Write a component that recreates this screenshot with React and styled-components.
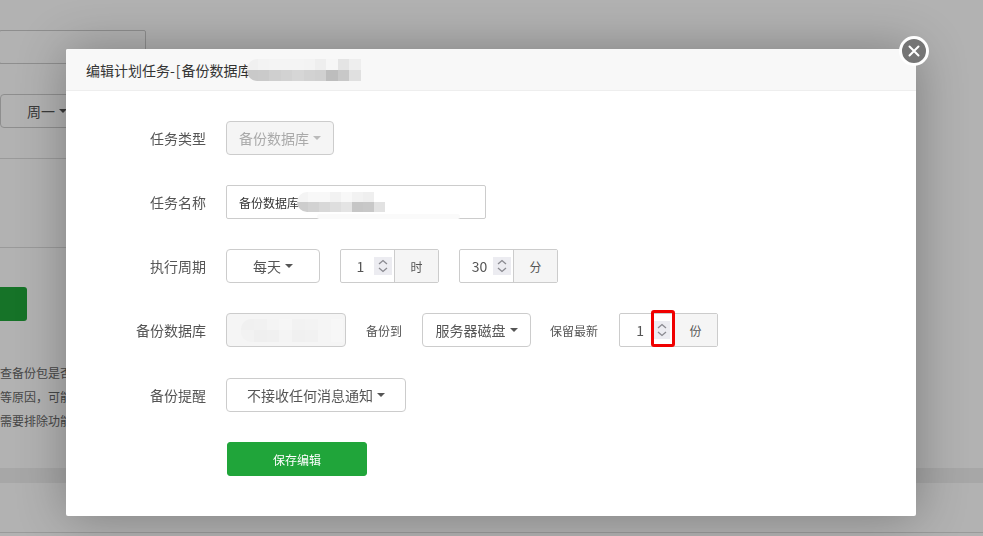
import React from "react";
import styled, { createGlobalStyle } from "styled-components";

const GlobalStyle = createGlobalStyle`
  html, body {
    margin: 0;
    height: 100%;
    overflow: hidden;
    background: #fff;
    font-family: "Noto Sans CJK SC", "Noto Sans", sans-serif;
    color: #555;
  }
`;

// page behind the layer, only its left edge is visible
const Page = styled.div`
  display: flex;
  flex-direction: column;
  height: 536px;
  width: 983px;
  overflow: hidden;
  background: #fff;
`;

const PageSection = styled.div`
  width: 400px;
  height: ${(p) => p.$height}px;
  padding-top: ${(p) => p.$top || 0}px;
  box-sizing: border-box;
  border-bottom: ${(p) => (p.$line ? "1px solid #ddd" : "none")};
`;

const PageInput = styled.div`
  width: 147px;
  height: 34px;
  margin-left: -1px;
  box-sizing: border-box;
  border: 1px solid #ccc;
  border-radius: 2px;
`;

const PageSelect = styled.div`
  display: flex;
  align-items: center;
  gap: 4px;
  width: 90px;
  height: 34px;
  padding-left: 26px;
  box-sizing: border-box;
  border: 1px solid #ccc;
  border-radius: 4px;
  font-size: 14px;
`;

const PageButton = styled.div`
  width: 27px;
  height: 34px;
  background: #20a53a;
  border-radius: 0 3px 3px 0;
`;

const Notes = styled.div`
  display: flex;
  flex-direction: column;
  gap: 6px;
  height: 147px;
  padding-top: 43px;
  box-sizing: border-box;
  font-size: 12px;
  line-height: 18px;
  white-space: nowrap;
  color: #666;
`;

const Band = styled.div`
  height: 15px;
  background: #f0f0f0;
`;

const PageFooter = styled.div`
  height: 49px;
  border-bottom: 1px solid #ddd;
`;

const Shade = styled.div`
  position: fixed;
  inset: 0;
  background: rgba(0, 0, 0, 0.3);
`;

const Modal = styled.div`
  position: absolute;
  left: 66px;
  top: 49px;
  width: 850px;
  height: 467px;
  display: flex;
  flex-direction: column;
  background: #fff;
  border-radius: 2px;
  box-shadow: 1px 1px 50px rgba(0, 0, 0, 0.3);
`;

const Header = styled.div`
  display: flex;
  align-items: center;
  height: 41px;
  padding-left: 20px;
  background: #f8f8f8;
  border-bottom: 1px solid #eee;
  border-radius: 2px 2px 0 0;
  font-size: 14px;
  color: #333;
`;

const Dash = styled.span`
  letter-spacing: 1px;
`;

const CloseButton = styled.button`
  position: absolute;
  top: -13px;
  right: -13px;
  display: flex;
  align-items: center;
  justify-content: center;
  width: 30px;
  height: 30px;
  padding: 0;
  box-sizing: border-box;
  background: #757575;
  border: 3px solid #fff;
  border-radius: 50%;
`;

const Form = styled.div`
  display: flex;
  flex-direction: column;
  gap: 30px;
  padding-top: 30px;
`;

const Row = styled.div`
  display: flex;
  align-items: center;
  height: 34px;
  margin-top: ${(p) => p.$shift || 0}px;
`;

const Label = styled.label`
  width: 140px;
  margin-right: 20px;
  text-align: right;
  font-size: 14px;
  color: #555;
`;

const Select = styled.div`
  display: flex;
  align-items: center;
  justify-content: center;
  gap: 4px;
  width: ${(p) => p.$width}px;
  height: 34px;
  box-sizing: border-box;
  background: ${(p) => (p.$disabled ? "#f5f5f5" : "#fff")};
  border: 1px solid #ccc;
  border-radius: 4px;
  font-size: 14px;
  white-space: nowrap;
  color: ${(p) => (p.$disabled ? "#aaa" : "#555")};
`;

const Caret = styled.span`
  width: 0;
  height: 0;
  border-top: 4px solid ${(p) => p.$color || "#555"};
  border-left: 4px solid transparent;
  border-right: 4px solid transparent;
`;

const NameInput = styled.div`
  position: relative;
  display: flex;
  align-items: center;
  width: 260px;
  height: 34px;
  padding-left: 12px;
  box-sizing: border-box;
  border: 1px solid #ccc;
  border-radius: 2px;
  font-size: 12px;
  color: #333;
`;

// faint tail of the mosaic running over the input's lower edge
const SmudgeTail = styled.span`
  position: absolute;
  left: 90px;
  top: 28px;
  width: 143px;
  height: 5px;
  background: #fafafa;
  border-radius: 3px;
`;

const ReadonlyField = styled.div`
  display: flex;
  align-items: center;
  width: 120px;
  height: 34px;
  padding-left: 14px;
  box-sizing: border-box;
  background: #f5f5f5;
  border: 1px solid #ccc;
  border-radius: 4px;
`;

const Stepper = styled.div`
  position: relative;
  display: flex;
  width: 99px;
  height: 34px;
  margin-left: ${(p) => p.$left || 20}px;
  box-sizing: border-box;
  border: 1px solid #ccc;
  border-radius: 2px;
`;

const StepValue = styled.div`
  display: flex;
  align-items: center;
  justify-content: center;
  flex: 1;
  padding-left: 6px;
  font-size: 14px;
  color: #555;
`;

const Spinner = styled.div`
  display: flex;
  flex-direction: column;
  align-items: center;
  justify-content: center;
  align-self: center;
  width: ${(p) => p.$width || 18}px;
  height: 18px;
  background: #ececf1;
`;

const Addon = styled.div`
  display: flex;
  align-items: center;
  justify-content: center;
  width: 43px;
  margin-left: ${(p) => p.$left || 2}px;
  background: #f5f5f5;
  border-left: 1px solid #ccc;
  font-size: 12px;
  color: #555;
`;

const Inline = styled.span`
  margin: 0 ${(p) => p.$right}px 0 ${(p) => p.$left}px;
  font-size: 12px;
  white-space: nowrap;
  color: #555;
`;

// red box the author of the screenshot drew round the spinner
const Highlight = styled.div`
  position: absolute;
  left: 31px;
  top: -4px;
  width: 24px;
  height: 37px;
  box-sizing: border-box;
  border: 3px solid #f00000;
  border-radius: 3px;
`;

const SaveButton = styled.button`
  width: 140px;
  height: 34px;
  margin-left: 161px;
  padding: 0;
  background: #20a53a;
  border: 1px solid #20a53a;
  border-radius: 3px;
  font-family: inherit;
  font-size: 12px;
  color: #fff;
`;

// mosaic that hides the private part of a name
const Mosaic = styled.div`
  display: grid;
  grid-template-columns: repeat(${(p) => p.$cols}, ${(p) => p.$cell}px);
  grid-auto-rows: ${(p) => p.$rowHeight}px;
  margin: ${(p) => p.$margin || 0};
  border-radius: 10px 0 0 10px;
  overflow: hidden;
`;

const MosaicCell = styled.span`
  background: ${(p) => p.$tone};
`;

const titleTones = [
  "#f0f0f0", "#f3f3f3", "#f4f4f4", "#f4f4f4", "#f4f4f4", "#f3f3f3", "#eeeeee", "#f6f6f6", "#e4e4e4", "#eeeeee",
  "#c9c9c9", "#cacaca", "#cfcfcf", "#d2d2d2", "#d6d6d6", "#d2d2d2", "#d0d0d0", "#bdbdbd", "#c8c8c8", "#e0e0e0",
];
const nameTones = [
  "#f4f4f4", "#f8f8f8", "#f8f8f8", "#f2f2f2", "#f8f8f8", "#f2f2f2", "#efefef", "#ffffff",
  "#cdcdcd", "#d2d2d2", "#d8d8d8", "#dedede", "#e4e4e4", "#c6c6c6", "#c8c8c8", "#e2e2e2",
];
const dbTones = [
  "#f0f0f0", "#f1f1f1", "#f4f4f4", "#f6f6f6", "#f2f2f2", "#f3f3f3", "#f5f5f5", "#f7f7f7",
  "#f2f2f2", "#efefef", "#f0f0f0", "#f4f4f4", "#f0f0f0", "#f1f1f1", "#f5f5f5", "#f7f7f7",
];

const Smudge = ({ tones, cols, cell, rowHeight, margin }) => (
  <Mosaic $cols={cols} $cell={cell} $rowHeight={rowHeight} $margin={margin}>
    {tones.map((tone, i) => (
      <MosaicCell key={i} $tone={tone} />
    ))}
  </Mosaic>
);

const CloseIcon = () => (
  <svg width="12" height="12" viewBox="0 0 12 12">
    <path d="M1.5 1.5 L10.5 10.5 M10.5 1.5 L1.5 10.5" stroke="#fff" strokeWidth="2" strokeLinecap="round" />
  </svg>
);

const Chevrons = () => (
  <svg width="12" height="16" viewBox="0 0 12 16" fill="none">
    <path d="M2 6 L6 2.5 L10 6" stroke="#8a8a90" strokeWidth="1.3" />
    <path d="M2 10 L6 13.5 L10 10" stroke="#8a8a90" strokeWidth="1.3" />
  </svg>
);

const NumberStep = ({ value, unit, left, spinnerWidth, addonLeft, marked }) => (
  <Stepper $left={left}>
    <StepValue>{value}</StepValue>
    <Spinner $width={spinnerWidth}>
      <Chevrons />
    </Spinner>
    <Addon $left={addonLeft}>{unit}</Addon>
    {marked && <Highlight />}
  </Stepper>
);

const App = () => {
  return (
    <>
      <GlobalStyle />
      <Page>
        <PageSection $height={64} $top={30} $line>
          <PageInput />
        </PageSection>
        <PageSection $height={95} $top={30} $line>
          <PageSelect>
            周一 <Caret />
          </PageSelect>
        </PageSection>
        <PageSection $height={89} $line />
        <PageSection $height={73} $top={39}>
          <PageButton />
        </PageSection>
        <Notes>
          <span>查备份包是否</span>
          <span>等原因，可能</span>
          <span>需要排除功能</span>
        </Notes>
        <Band />
        <PageFooter />
      </Page>
      <Shade />
      <Modal>
        <Header>
          编辑计划任务<Dash>-[</Dash>备份数据库
          <Smudge tones={titleTones} cols={10} cell={11.4} rowHeight={11} margin="0 0 0 -5px" />
        </Header>
        <CloseButton aria-label="关闭">
          <CloseIcon />
        </CloseButton>
        <Form>
          <Row>
            <Label>任务类型</Label>
            <Select $width={108} $disabled>
              备份数据库 <Caret $color="#bbb" />
            </Select>
          </Row>
          <Row>
            <Label>任务名称</Label>
            <NameInput>
              备份数据库
              <Smudge tones={nameTones} cols={8} cell={11} rowHeight={10} margin="0 0 0 -2px" />
              <SmudgeTail />
            </NameInput>
          </Row>
          <Row>
            <Label>执行周期</Label>
            <Select $width={94}>
              每天 <Caret />
            </Select>
            <NumberStep value="1" unit="时" />
            <NumberStep value="30" unit="分" />
          </Row>
          <Row>
            <Label>备份数据库</Label>
            <ReadonlyField>
              <Smudge tones={dbTones} cols={8} cell={12.8} rowHeight={11.5} />
            </ReadonlyField>
            <Inline $left={20} $right={20}>
              备份到
            </Inline>
            <Select $width={109}>
              服务器磁盘 <Caret />
            </Select>
            <Inline $left={19} $right={0}>
              保留最新
            </Inline>
            <NumberStep value="1" unit="份" left={21} spinnerWidth={16} addonLeft={3} marked />
          </Row>
          <Row $shift={1}>
            <Label>备份提醒</Label>
            <Select $width={180}>
              不接收任何消息通知 <Caret />
            </Select>
          </Row>
          <SaveButton>保存编辑</SaveButton>
        </Form>
      </Modal>
    </>
  );
};

export default App;
